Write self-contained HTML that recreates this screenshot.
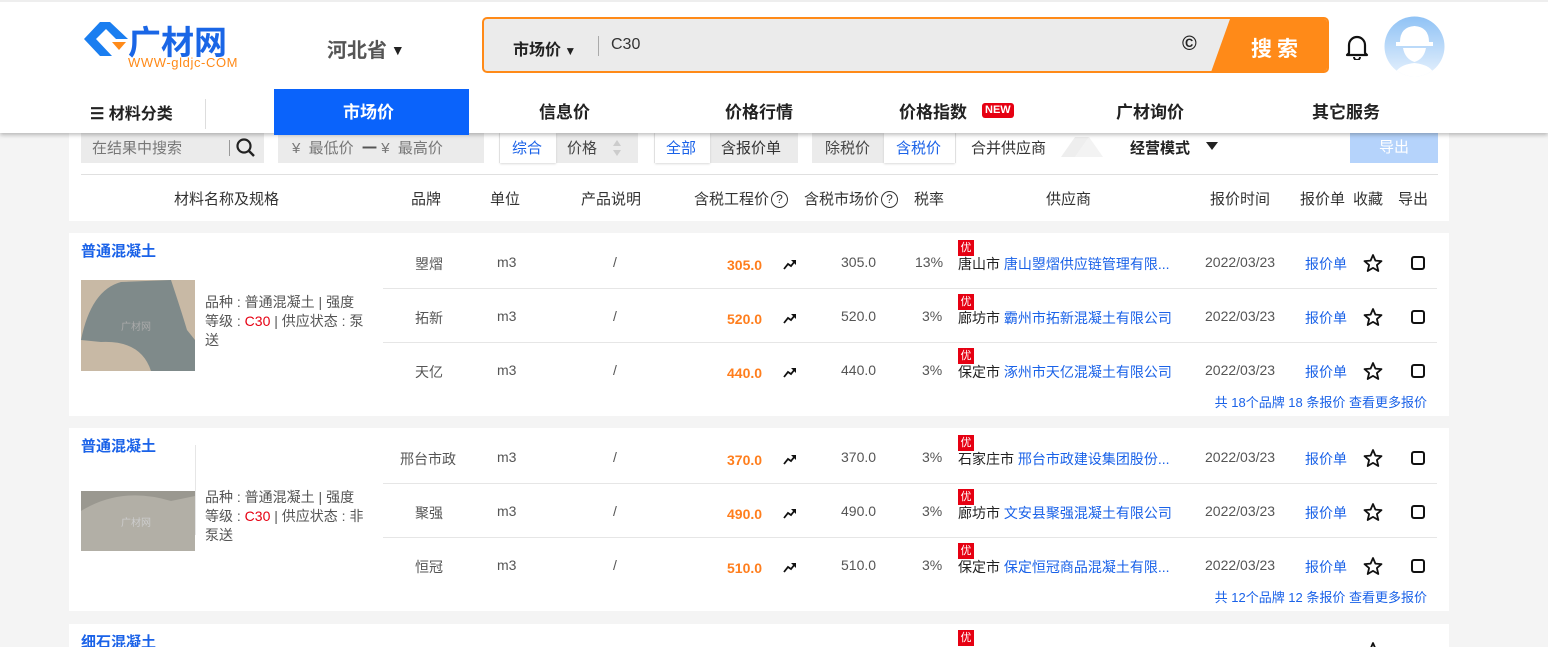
<!DOCTYPE html>
<html><head><meta charset="utf-8"><style>
*{margin:0;padding:0;box-sizing:border-box}
html,body{width:1548px;height:647px;overflow:hidden}
body{background:#f4f4f4;font-family:"Liberation Sans","Noto Sans CJK SC",sans-serif;position:relative;color:#333}
.a{position:absolute;white-space:nowrap}
#hdr{position:absolute;left:0;top:0;width:1548px;height:133px;background:#fff;box-shadow:0 2px 4px rgba(0,0,0,.25);z-index:5;border-top:2px solid #eee}
.nav{font-size:17px;font-weight:bold;color:#222;top:96px}
.panel{position:absolute;left:69px;width:1380px;background:#fff}
.f{font-size:15px;color:#777;top:137px}
.seg{position:absolute;top:133px;height:30px;background:#ebebeb}
.hd{font-size:15px;color:#333;top:188px}
.card{position:absolute;left:69px;width:1380px;height:183px;background:#fff}
.t{font-size:15px;color:#1a62e8;font-weight:bold;left:12px;top:7px}
.r{position:absolute;left:0;width:1380px;height:54px}
.r span{position:absolute;top:18px;font-size:14px;color:#555;white-space:nowrap}
.ln{position:absolute;left:314px;width:1054px;height:1px;background:#e6e6e6}
.pr{color:#ff7e1d!important;font-weight:bold}
.bl{color:#1a62e8!important}
.you{position:absolute;top:4px;left:889px;width:16px;height:16px;background:#e60012;color:#fff;font-size:11px;text-align:center;line-height:16px}
.cb{position:absolute;top:20px;left:1342px;width:14px;height:14px;border:2px solid #111;border-radius:3px}
.st{position:absolute;top:17px;left:1294px}
.tr{position:absolute;top:22px;left:714px}
.desc{position:absolute;left:136px;top:60px;width:162px;font-size:14px;line-height:19px;color:#555;white-space:normal}
.foot{position:absolute;right:22px;top:159px;font-size:13px;color:#1a62e8}
</style></head><body>
<svg width="0" height="0" style="position:absolute"><defs>
<symbol id="star" viewBox="0 0 20 20"><polygon points="10,2 12.4,7.6 18.5,8.1 13.9,12.1 15.3,18 10,14.9 4.7,18 6.1,12.1 1.5,8.1 7.6,7.6" fill="none" stroke="#111" stroke-width="1.8" stroke-linejoin="round"/></symbol>
<symbol id="trend" viewBox="0 0 14 12"><path d="M1 11 L5 6 L8 8 L12 3" fill="none" stroke="#111" stroke-width="1.8"/><path d="M8 2 L13 2 L13 7Z" fill="#111"/></symbol>
</defs></svg>
<div id="hdr">
 <svg class="a" style="left:82px;top:18px" width="48" height="38" viewBox="0 0 48 38"><path d="M18 2 L2 19 L18 36 L30 36 L14 19 L24 9 L34 19 L46 19 L28 2Z" fill="#1a7ef0"/><path d="M30 22 L44 22 L37 30Z" fill="#ff8a18"/></svg>
 <div class="a" style="left:128px;top:14px;font-size:33px;font-weight:bold;color:#1a66e6;letter-spacing:0px">广材网</div>
 <div class="a" style="left:128px;top:53px;font-size:13px;color:#ff8a18;letter-spacing:0.6px">WWW-gldjc-COM</div>
 <div class="a" style="left:327px;top:32px;font-size:20px;font-weight:bold;color:#555">河北省<span style="font-size:14px;color:#222;vertical-align:2px"> ▼</span></div>
 <div class="a" style="left:482px;top:15px;width:847px;height:56px;border:2px solid #ff8a18;border-radius:5px;background:#ebebeb;overflow:hidden">
  <div class="a" style="left:29px;top:17px;font-size:16px;font-weight:bold;color:#222">市场价<span style="font-size:12px"> ▼</span></div>
  <div class="a" style="left:114px;top:17px;width:1px;height:20px;background:#aaa"></div>
  <div class="a" style="left:127px;top:17px;font-size:16px;color:#333">C30</div>
  <div class="a" style="left:698px;top:14px;font-size:20px;font-weight:bold;color:#222">©</div>
  <svg class="a" style="left:726px;top:0" width="120" height="56"><polygon points="20,0 120,0 120,56 0,56" fill="#ff8a18"/></svg>
  <div class="a" style="left:767px;top:14px;font-size:21px;font-weight:bold;color:#fff;letter-spacing:5px">搜索</div>
 </div>
 <svg class="a" style="left:1345px;top:32px" width="24" height="26" viewBox="0 0 24 26"><path d="M4 19 L4 11 A8 8 0 0 1 20 11 L20 19 L22 21 L2 21Z" fill="none" stroke="#111" stroke-width="2.2" stroke-linejoin="round"/><path d="M9 23 A3 3 0 0 0 15 23" fill="none" stroke="#111" stroke-width="2"/></svg>
 <svg class="a" style="left:1384px;top:14px" width="61" height="61" viewBox="0 0 61 61"><defs><linearGradient id="g" x1="0" y1="0" x2="0" y2="1"><stop offset="0" stop-color="#8fc2f5"/><stop offset="1" stop-color="#e6f1fd"/></linearGradient><clipPath id="c"><circle cx="30.5" cy="30.5" r="30"/></clipPath></defs><circle cx="30.5" cy="30.5" r="30" fill="url(#g)"/><g clip-path="url(#c)"><path d="M16 26 Q16 11 30.5 10 Q45 11 45 26 L49 26 L49 30 L12 30 L12 26Z" fill="#fff"/><path d="M19 32 Q21 43 30.5 46 Q40 43 42 32Z" fill="#fff"/><path d="M10 61 Q12 49 30.5 47 Q49 49 51 61Z" fill="#fff"/></g></svg>
 <div class="a" style="left:90px;top:98px;font-size:16px;font-weight:bold;color:#222">☰ 材料分类</div>
 <div class="a" style="left:205px;top:97px;width:1px;height:30px;background:#ddd"></div>
 <div class="a" style="left:274px;top:87px;width:195px;height:46px;background:#0a63fb"></div>
 <div class="a nav" style="left:343px;color:#fff">市场价</div>
 <div class="a nav" style="left:539px">信息价</div>
 <div class="a nav" style="left:725px">价格行情</div>
 <div class="a nav" style="left:899px">价格指数</div>
 <div class="a" style="left:982px;top:101px;background:#e60012;color:#fff;font-size:11px;font-weight:bold;padding:0 3px;border-radius:3px;line-height:15px">NEW</div>
 <div class="a nav" style="left:1116px">广材询价</div>
 <div class="a nav" style="left:1312px">其它服务</div>
</div>

<div class="panel" style="top:125px;height:96px"></div>
<div class="seg" style="left:81px;width:183px"></div>
<div class="a f" style="left:92px">在结果中搜索</div>
<div class="a" style="left:229px;top:140px;width:1px;height:16px;background:#999"></div>
<svg class="a" style="left:236px;top:138px" width="20" height="20"><circle cx="8" cy="8" r="6.5" fill="none" stroke="#222" stroke-width="2.2"/><line x1="13" y1="13" x2="18" y2="18" stroke="#222" stroke-width="2.4"/></svg>
<div class="seg" style="left:278px;width:206px"></div>
<div class="a f" style="left:292px">¥ &nbsp;最低价 &nbsp;<b style="color:#555">一</b> ¥ &nbsp;最高价</div>
<div class="seg" style="left:499px;width:139px"></div>
<div class="a" style="left:500px;top:133px;width:56px;height:30px;background:#fff;box-shadow:0 1px 2px rgba(0,0,0,.15)"></div>
<div class="a f" style="left:512px;color:#1a62e8">综合</div>
<div class="a f" style="left:567px;color:#444">价格</div>
<svg class="a" style="left:612px;top:139px" width="10" height="18"><polygon points="5,1 9,7 1,7" fill="#ccc"/><polygon points="5,17 9,11 1,11" fill="#ccc"/></svg>
<div class="seg" style="left:654px;width:144px"></div>
<div class="a" style="left:655px;top:133px;width:55px;height:30px;background:#fff;box-shadow:0 1px 2px rgba(0,0,0,.15)"></div>
<div class="a f" style="left:666px;color:#1a62e8">全部</div>
<div class="a f" style="left:721px;color:#333">含报价单</div>
<div class="seg" style="left:812px;width:144px"></div>
<div class="a" style="left:884px;top:133px;width:71px;height:30px;background:#fff;box-shadow:0 1px 2px rgba(0,0,0,.15)"></div>
<div class="a f" style="left:825px;color:#444">除税价</div>
<div class="a f" style="left:896px;color:#1a62e8">含税价</div>
<div class="a f" style="left:971px;color:#333">合并供应商</div>
<svg class="a" style="left:1055px;top:133px" width="50" height="26"><polygon points="6,24 20,4 34,4 20,24" fill="#eee"/><polygon points="20,24 34,4 48,24" fill="#f3f3f3"/></svg>
<div class="a f" style="left:1130px;color:#222;font-weight:bold">经营模式</div>
<svg class="a" style="left:1206px;top:142px" width="12" height="8"><polygon points="0,0 12,0 6,8" fill="#222"/></svg>
<div class="a" style="left:1350px;top:133px;width:88px;height:30px;background:#b5d3fb;color:#fff;font-size:15px;text-align:center;line-height:30px">导出</div>
<div class="a" style="left:81px;top:174px;width:1357px;height:1px;background:#e0e0e0"></div>
<div class="a hd" style="left:174px">材料名称及规格</div>
<div class="a hd" style="left:411px">品牌</div>
<div class="a hd" style="left:490px">单位</div>
<div class="a hd" style="left:581px">产品说明</div>
<div class="a hd" style="left:694px">含税工程价<span style="display:inline-block;width:17px;height:17px;border:1.5px solid #333;border-radius:50%;font-size:12px;text-align:center;line-height:14px;vertical-align:1px;margin-left:2px">?</span></div>
<div class="a hd" style="left:804px">含税市场价<span style="display:inline-block;width:17px;height:17px;border:1.5px solid #333;border-radius:50%;font-size:12px;text-align:center;line-height:14px;vertical-align:1px;margin-left:2px">?</span></div>
<div class="a hd" style="left:914px">税率</div>
<div class="a hd" style="left:1046px">供应商</div>
<div class="a hd" style="left:1210px">报价时间</div>
<div class="a hd" style="left:1300px">报价单</div>
<div class="a hd" style="left:1353px">收藏</div>
<div class="a hd" style="left:1398px">导出</div>

<!-- card 1 -->
<div class="card" style="top:233px">
 <div class="a t">普通混凝土</div>
 <svg class="a" style="left:12px;top:47px" width="114" height="91"><rect width="114" height="91" fill="#c8b9a5"/><path d="M0 60 Q10 10 40 2 L90 0 Q100 30 106 50 L114 60 L114 91 L70 91 Q60 60 20 62 Z" fill="#7f8a8a"/><text x="40" y="50" font-size="10" fill="#aaa" font-family="Noto Sans CJK SC">广材网</text></svg>
 <div class="desc">品种 : 普通混凝土 | 强度等级 : <span style="color:#e60012">C30</span> | 供应状态 : 泵送</div>
 <div class="r" style="top:3px"><span style="left:346px">曌熠</span><span style="left:428px">m3</span><span style="left:544px">/</span><span class="pr" style="left:658px;top:21px">305.0</span><svg class="tr" width="14" height="12"><use href="#trend"/></svg><span style="left:772px">305.0</span><span style="left:846px">13%</span><div class="you">优</div><span style="left:889px;color:#222">唐山市 <b class="bl" style="font-weight:normal">唐山曌熠供应链管理有限...</b></span><span style="left:1136px">2022/03/23</span><span class="bl" style="left:1236px">报价单</span><svg class="st" width="20" height="20"><use href="#star"/></svg><div class="cb"></div></div>
 <div class="ln" style="top:55px"></div>
 <div class="r" style="top:57px"><span style="left:346px">拓新</span><span style="left:428px">m3</span><span style="left:544px">/</span><span class="pr" style="left:658px;top:21px">520.0</span><svg class="tr" width="14" height="12"><use href="#trend"/></svg><span style="left:772px">520.0</span><span style="left:853px">3%</span><div class="you">优</div><span style="left:889px;color:#222">廊坊市 <b class="bl" style="font-weight:normal">霸州市拓新混凝土有限公司</b></span><span style="left:1136px">2022/03/23</span><span class="bl" style="left:1236px">报价单</span><svg class="st" width="20" height="20"><use href="#star"/></svg><div class="cb"></div></div>
 <div class="ln" style="top:109px"></div>
 <div class="r" style="top:111px"><span style="left:346px">天亿</span><span style="left:428px">m3</span><span style="left:544px">/</span><span class="pr" style="left:658px;top:21px">440.0</span><svg class="tr" width="14" height="12"><use href="#trend"/></svg><span style="left:772px">440.0</span><span style="left:853px">3%</span><div class="you">优</div><span style="left:889px;color:#222">保定市 <b class="bl" style="font-weight:normal">涿州市天亿混凝土有限公司</b></span><span style="left:1136px">2022/03/23</span><span class="bl" style="left:1236px">报价单</span><svg class="st" width="20" height="20"><use href="#star"/></svg><div class="cb"></div></div>
 <div class="foot">共 18个品牌 18 条报价 查看更多报价</div>
</div>

<!-- card 2 -->
<div class="card" style="top:428px">
 <div class="a t">普通混凝土</div>
 <svg class="a" style="left:12px;top:63px" width="114" height="60"><rect width="114" height="60" fill="#9a9890"/><path d="M0 20 Q40 -5 90 10 L114 5 L114 60 L0 60Z" fill="#b2afa6"/><text x="40" y="35" font-size="10" fill="#ccc" font-family="Noto Sans CJK SC">广材网</text></svg>
 <div class="a" style="left:126px;top:17px;width:1px;height:90px;background:#e6e6e6"></div>
 <div class="desc" style="top:60px">品种 : 普通混凝土 | 强度等级 : <span style="color:#e60012">C30</span> | 供应状态 : 非泵送</div>
 <div class="r" style="top:3px"><span style="left:331px">邢台市政</span><span style="left:428px">m3</span><span style="left:544px">/</span><span class="pr" style="left:658px;top:21px">370.0</span><svg class="tr" width="14" height="12"><use href="#trend"/></svg><span style="left:772px">370.0</span><span style="left:853px">3%</span><div class="you">优</div><span style="left:889px;color:#222">石家庄市 <b class="bl" style="font-weight:normal">邢台市政建设集团股份...</b></span><span style="left:1136px">2022/03/23</span><span class="bl" style="left:1236px">报价单</span><svg class="st" width="20" height="20"><use href="#star"/></svg><div class="cb"></div></div>
 <div class="ln" style="top:55px"></div>
 <div class="r" style="top:57px"><span style="left:346px">聚强</span><span style="left:428px">m3</span><span style="left:544px">/</span><span class="pr" style="left:658px;top:21px">490.0</span><svg class="tr" width="14" height="12"><use href="#trend"/></svg><span style="left:772px">490.0</span><span style="left:853px">3%</span><div class="you">优</div><span style="left:889px;color:#222">廊坊市 <b class="bl" style="font-weight:normal">文安县聚强混凝土有限公司</b></span><span style="left:1136px">2022/03/23</span><span class="bl" style="left:1236px">报价单</span><svg class="st" width="20" height="20"><use href="#star"/></svg><div class="cb"></div></div>
 <div class="ln" style="top:109px"></div>
 <div class="r" style="top:111px"><span style="left:346px">恒冠</span><span style="left:428px">m3</span><span style="left:544px">/</span><span class="pr" style="left:658px;top:21px">510.0</span><svg class="tr" width="14" height="12"><use href="#trend"/></svg><span style="left:772px">510.0</span><span style="left:853px">3%</span><div class="you">优</div><span style="left:889px;color:#222">保定市 <b class="bl" style="font-weight:normal">保定恒冠商品混凝土有限...</b></span><span style="left:1136px">2022/03/23</span><span class="bl" style="left:1236px">报价单</span><svg class="st" width="20" height="20"><use href="#star"/></svg><div class="cb"></div></div>
 <div class="foot">共 12个品牌 12 条报价 查看更多报价</div>
</div>

<!-- card 3 -->
<div class="card" style="top:624px;height:23px">
 <div class="a t">细石混凝土</div>
 <div class="you" style="left:889px;top:6px">优</div>
 <svg class="st" style="top:17px" width="20" height="20"><use href="#star"/></svg>
</div>
</body></html>
